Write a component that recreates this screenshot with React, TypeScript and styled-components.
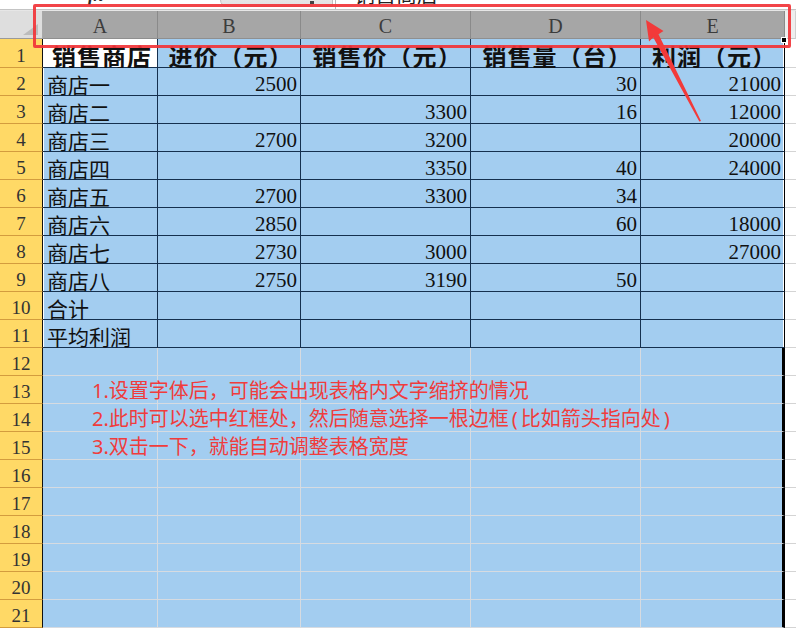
import React from "react";
import styled, { createGlobalStyle } from "styled-components";

const GlobalStyle = createGlobalStyle`
  html, body { margin: 0; padding: 0; background: #ffffff; }
  * { box-sizing: border-box; }
`;

const BLUE = "#a3cdf0";
const NAVY = "#15304f";
const LIGHT = "#d6dbe1";
const CJK = `"Liberation Serif", "Noto Sans CJK SC", serif`;

const Page = styled.div`
  position: relative;
  width: 796px;
  height: 630px;
  overflow: hidden;
  background: #ffffff;
`;

const Toolbar = styled.div`
  height: 10px;
  display: flex;
  align-items: flex-end;
  overflow: hidden;
  background: #ffffff;
  border-bottom: 1px solid #c4c4c4;
`;

const FxLabel = styled.span`
  margin: 0 0 5px 88px;
  font-family: "Liberation Serif", serif;
  font-style: italic;
  font-weight: 700;
  font-size: 18px;
  line-height: 18px;
  color: #2a2a2a;
`;

const NameButtons = styled.div`
  margin-left: 117px;
  width: 113px;
  height: 30px;
  margin-bottom: 2px;
  border: 1px solid #c2c2c2;
  border-radius: 0 0 0 7px;
  background: linear-gradient(#f7f7f7, #e2e2e2);
  display: flex;
  align-items: flex-end;
  justify-content: flex-end;
  padding: 0 18px 2px 0;
`;

const DropMark = styled.span`
  width: 4px;
  height: 3px;
  background: #444;
`;

const Divider = styled.div`
  width: 1px;
  height: 10px;
  margin-left: 2px;
  background: #b8b8b8;
`;

const FormulaText = styled.span`
  margin: 0 0 5px 18px;
  font-family: "Noto Sans CJK SC", sans-serif;
  font-size: 21px;
  line-height: 21px;
  color: #222;
`;

const Sheet = styled.div`
  display: grid;
  grid-template-columns: 43px 115px 143px 170px 170px 144px 1fr;
  grid-template-rows: 28px 29px repeat(20, 28px);
  border-top: 1px solid #e6e6e6;
`;

const Corner = styled.div`
  position: relative;
  background: #dedede;
  border-right: 1px solid #a8a8a8;
  border-bottom: 1px solid #9a9a9a;
  &::after {
    content: "";
    position: absolute;
    right: 4px;
    bottom: 3px;
    width: 0;
    height: 0;
    border-left: 15px solid transparent;
    border-bottom: 11px solid #bcbcbc;
  }
`;

const ColHead = styled.div<{ $dim?: boolean }>`
  display: flex;
  align-items: center;
  justify-content: center;
  padding-top: 4px;
  background: ${(p) => (p.$dim ? "#eeeeee" : "#a6a6a6")};
  border-right: 1px solid ${(p) => (p.$dim ? "#d0d0d0" : "#8a8a8a")};
  border-bottom: 1px solid ${(p) => (p.$dim ? "#c8c8c8" : "#8f8f8f")};
  font-family: "Liberation Serif", serif;
  font-size: 20px;
  color: #3c3c3c;
`;

const RowHead = styled.div`
  display: flex;
  align-items: center;
  justify-content: center;
  padding-top: 5px;
  background: #ffd966;
  border-right: 1px solid #111;
  border-bottom: 1px solid #d39c3e;
  font-family: "Liberation Serif", serif;
  font-size: 19px;
  color: #333;
`;

type Align = "left" | "right" | "center";
type Edge = "none" | "first" | "last" | "lastThick";

const Cell = styled.div<{
  $fill: string;
  $line: string;
  $align: Align;
  $bold?: boolean;
  $edge: Edge;
}>`
  position: relative;
  display: flex;
  align-items: center;
  justify-content: ${(p) =>
    p.$align === "right" ? "flex-end" : p.$align === "center" ? "center" : "flex-start"};
  padding: ${(p) => (p.$align === "right" ? "5px 3px 0 0" : "5px 0 0 4px")};
  background: ${(p) => p.$fill};
  border-bottom: 1px solid ${(p) => p.$line};
  border-right: ${(p) =>
    p.$edge === "lastThick"
      ? "3px solid #000"
      : p.$edge === "last"
      ? "1px solid #000"
      : `1px solid ${p.$line}`};
  box-shadow: ${(p) =>
    p.$edge === "last"
      ? "inset -1px 0 0 #ffffff"
      : p.$edge === "first"
      ? "inset 1px 0 0 #ffffff"
      : "none"};
  font-family: ${CJK};
  font-size: ${(p) => (p.$bold ? "24px" : "21px")};
  font-weight: ${(p) => (p.$bold ? 700 : 400)};
  letter-spacing: ${(p) => (p.$bold ? "1px" : "0")};
  color: #111;
  white-space: nowrap;
`;

const OutCell = styled.div`
  background: #ffffff;
  border-bottom: 1px solid #d4d4d4;
`;

const RedFrame = styled.div`
  position: absolute;
  left: 33px;
  top: 4px;
  width: 758px;
  height: 44px;
  border: 3px solid rgba(241, 52, 56, 0.92);
  border-radius: 2px;
  pointer-events: none;
`;

const FillHandle = styled.div`
  position: absolute;
  left: 781px;
  top: 37px;
  width: 6px;
  height: 6px;
  background: #000;
  border: 1px solid #fff;
`;

const ArrowSvg = styled.svg`
  position: absolute;
  left: 640px;
  top: 14px;
  pointer-events: none;
`;

const Notes = styled.div`
  position: absolute;
  left: 92px;
  top: 377px;
  display: flex;
  flex-direction: column;
  font-family: "Noto Sans", "Noto Sans CJK SC", sans-serif;
  font-size: 20px;
  line-height: 28px;
  color: #f03c3c;
  pointer-events: none;
`;

const NoteLine = styled.div`
  height: 28px;
  white-space: nowrap;
`;

const Paren = styled.span`
  margin: 0 3px;
`;

const headers = ["A", "B", "C", "D", "E"];

const table: string[][] = [
  ["销售商店", "进价（元）", "销售价（元）", "销售量（台）", "利润（元）"],
  ["商店一", "2500", "", "30", "21000"],
  ["商店二", "", "3300", "16", "12000"],
  ["商店三", "2700", "3200", "", "20000"],
  ["商店四", "", "3350", "40", "24000"],
  ["商店五", "2700", "3300", "34", ""],
  ["商店六", "2850", "", "60", "18000"],
  ["商店七", "2730", "3000", "", "27000"],
  ["商店八", "2750", "3190", "50", ""],
  ["合计", "", "", "", ""],
  ["平均利润", "", "", "", ""],
];

const TOTAL_ROWS = 21;

export default function App() {
  const rows: React.ReactNode[] = [];
  for (let r = 0; r < TOTAL_ROWS; r++) {
    const inTable = r < table.length;
    const data = inTable ? table[r] : ["", "", "", "", ""];
    rows.push(<RowHead key={`h${r}`}>{r + 1}</RowHead>);
    data.forEach((val, c) => {
      const header = r === 0;
      const align: Align = header ? "center" : c === 0 ? "left" : "right";
      const edge: Edge =
        c === 4 ? (inTable ? "last" : "lastThick") : c === 0 && inTable ? "first" : "none";
      const fill = r === 0 && c === 0 ? "#ffffff" : BLUE;
      rows.push(
        <Cell
          key={`c${r}-${c}`}
          $fill={fill}
          $line={inTable ? NAVY : LIGHT}
          $align={align}
          $bold={header}
          $edge={edge}
        >
          {val}
        </Cell>
      );
    });
    rows.push(<OutCell key={`f${r}`} />);
  }

  return (
    <Page>
      <GlobalStyle />
      <Toolbar>
        <FxLabel>fx</FxLabel>
        <NameButtons>
          <DropMark />
        </NameButtons>
        <Divider />
        <FormulaText>销售商店</FormulaText>
      </Toolbar>
      <Sheet>
        <Corner />
        {headers.map((h) => (
          <ColHead key={h}>{h}</ColHead>
        ))}
        <ColHead $dim />
        {rows}
      </Sheet>
      <FillHandle />
      <RedFrame />
      <ArrowSvg width="70" height="112" viewBox="640 14 70 112">
        <polygon
          points="646,20 663.5,31 658.5,34.2 701,121 699.3,121.6 653.3,37.6 649,41.5"
          fill="#f23a3a"
        />
      </ArrowSvg>
      <Notes>
        <NoteLine>1.设置字体后，可能会出现表格内文字缩挤的情况</NoteLine>
        <NoteLine>
          2.此时可以选中红框处，然后随意选择一根边框<Paren>(</Paren>比如箭头指向处<Paren>)</Paren>
        </NoteLine>
        <NoteLine>3.双击一下，就能自动调整表格宽度</NoteLine>
      </Notes>
    </Page>
  );
}
